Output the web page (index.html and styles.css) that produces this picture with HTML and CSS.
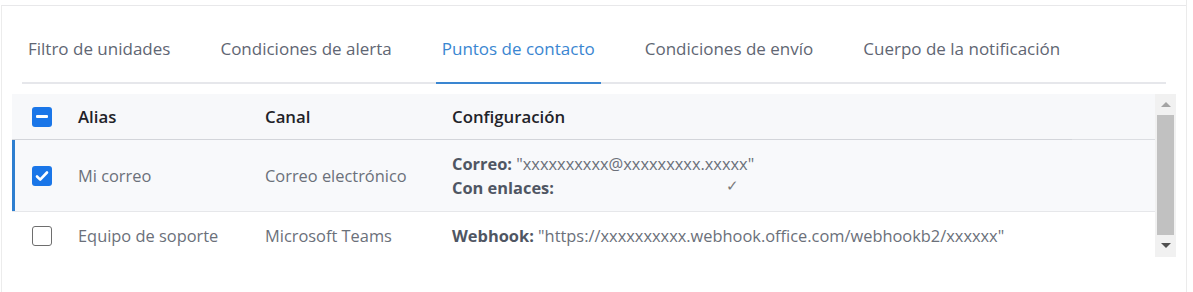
FILE: index.html
```html
<!DOCTYPE html>
<html lang="es">
<head>
<meta charset="utf-8">
<link rel="stylesheet" href="styles.css">
</head>
<body>
<div class="frame">
  <div class="panel">
    <nav class="tabs">
      <div class="tab">Filtro de unidades</div>
      <div class="tab">Condiciones de alerta</div>
      <div class="tab active">Puntos de contacto</div>
      <div class="tab">Condiciones de envío</div>
      <div class="tab">Cuerpo de la notificación</div>
    </nav>
    <div class="scroller">
      <div class="table">
        <div class="row head">
          <div class="cell c-check"><span class="cb cb-ind"></span></div>
          <div class="cell c-alias">Alias</div>
          <div class="cell c-canal">Canal</div>
          <div class="cell c-conf">Configuración</div>
          <div class="cell c-fill"></div>
        </div>
        <div class="row sel">
          <div class="cell c-check"><span class="cb cb-on"><svg viewBox="0 0 20 20" width="20" height="20"><path d="M5 10.5l3.2 3.2L15 6.5" fill="none" stroke="#fff" stroke-width="2.6" stroke-linecap="round" stroke-linejoin="round"/></svg></span></div>
          <div class="cell c-alias">Mi correo</div>
          <div class="cell c-canal">Correo electrónico</div>
          <div class="cell c-conf">
            <div class="line"><b>Correo:</b> "xxxxxxxxxx@xxxxxxxxx.xxxxx"</div>
            <div class="line"><b>Con enlaces:</b><span class="tick">✓</span></div>
          </div>
          <div class="cell c-fill"></div>
        </div>
        <div class="row">
          <div class="cell c-check"><span class="cb cb-off"></span></div>
          <div class="cell c-alias">Equipo de soporte</div>
          <div class="cell c-canal">Microsoft Teams</div>
          <div class="cell c-conf"><div class="line"><b>Webhook:</b> "https://xxxxxxxxxx.webhook.office.com/webhookb2/xxxxxx"</div></div>
          <div class="cell c-fill"></div>
        </div>
      </div>
      <div class="sbar">
        <div class="arrow up"></div>
        <div class="thumb"></div>
        <div class="arrow down"></div>
      </div>
    </div>
  </div>
</div>
</body>
</html>
```
FILE: styles.css
```css
html, body {
  margin: 0;
  padding: 0;
  background: #fff;
}
body {
  font-family: "Open Sans", "Noto Sans", sans-serif;
  font-size: 16.4px;
}
.frame {
  width: 1186px;
  height: 292px;
  border-right: 1px solid #ebebeb;
  overflow: hidden;
}
.panel {
  margin-top: 5px;
  margin-left: 1px;
  border-top: 1px solid #e8e8ea;
  border-left: 1px solid #ececec;
  height: 300px;
}
.tabs {
  display: flex;
  gap: 38px;
  margin: 0 20px 0 20px;
  border-bottom: 2px solid #e6e7eb;
}
.tab {
  padding: 31px 6px 21px;
  line-height: 24px;
  font-size: 17px;
  color: #5f6673;
  font-weight: 500;
  white-space: nowrap;
  margin-bottom: -2px;
  border-bottom: 2px solid transparent;
}
.tab.active {
  color: #3a86d1;
  border-bottom-color: #3a86d1;
}
.scroller {
  display: flex;
  margin: 10px 0 0 10px;
  width: 1164px;
  height: 163px;
  overflow: hidden;
}
.table {
  width: 1143px;
  flex: none;
}
.row {
  display: flex;
  align-items: center;
  border-bottom: 1px solid #e6e7ea;
  color: #6b707a;
  line-height: 24px;
}
.row.head {
  height: 45px;
  background: #f7f8fa;
  border-bottom: 1px solid #dcdee2;
  align-items: stretch;
  color: #1f2329;
  font-weight: 600;
  font-size: 16.8px;
}
.row.head .cell {
  display: flex;
  align-items: center;
}
.row.head .cell:not(.c-fill) {
  border-bottom: 1px solid #d3d5da;
  margin-bottom: -1px;
}
.row.sel {
  background: #f8f9fb;
  box-shadow: inset 3px 0 0 #2e7fd0;
  padding: 12px 0 11px;
}
.row:not(.head):not(.sel) {
  padding: 12px 0;
}
.cell {
  flex: none;
  padding-left: 12px;
  box-sizing: border-box;
  white-space: nowrap;
}
.c-check {
  width: 54px;
  padding-left: 20px;
  display: flex;
  align-items: center;
}
.c-alias { width: 187px; }
.c-canal { width: 187px; }
.c-conf { width: 632px; }
.c-fill { flex: 1; padding: 0; align-self: stretch; }
.line {
  height: 24px;
}
.cb {
  display: block;
  width: 20px;
  height: 20px;
  box-sizing: border-box;
  border-radius: 3px;
}
.cb-ind, .cb-on {
  background: #1a76e8;
  position: relative;
}
.cb-ind::after {
  content: "";
  position: absolute;
  left: 4px;
  right: 4px;
  top: 8.5px;
  height: 3px;
  background: #fff;
  border-radius: 1px;
}
.cb-on svg { display: block; }
.cb-off {
  border: 1.5px solid #6e6e6e;
  background: #fff;
}
.line b {
  color: #4f5663;
  font-weight: 700;
}
.tick {
  display: inline-block;
  margin-left: 172px;
  font-size: 15px;
  line-height: 1;
  color: #7a7a7a;
  vertical-align: 3px;
}
.sbar {
  width: 21px;
  flex: none;
  background: #f1f1f1;
  display: flex;
  flex-direction: column;
  align-items: center;
}
.arrow {
  width: 0;
  height: 0;
  border-left: 5px solid transparent;
  border-right: 5px solid transparent;
}
.arrow.up {
  margin-top: 8px;
  border-bottom: 5px solid #a3a3a3;
}
.thumb {
  width: 17px;
  height: 120px;
  margin-top: 8px;
  background: #c1c1c1;
}
.arrow.down {
  margin-top: 8px;
  border-top: 5px solid #505050;
}
```
